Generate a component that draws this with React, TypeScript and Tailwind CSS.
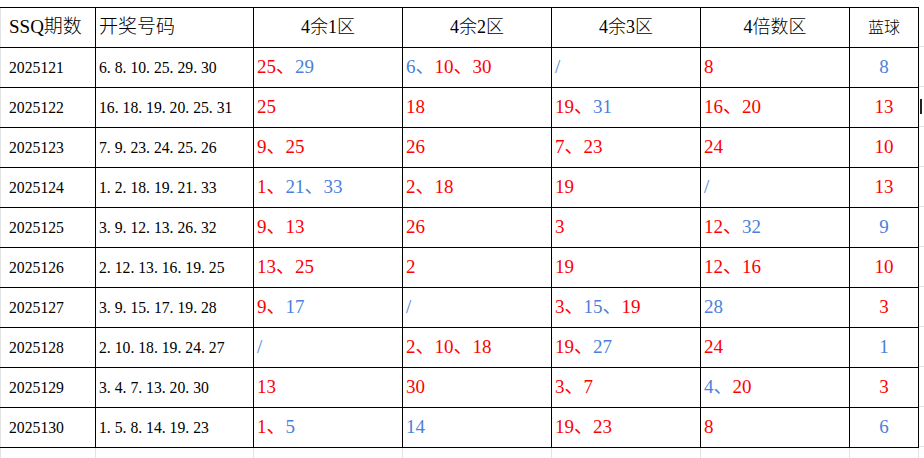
import React from 'react';

type Tone = 'r' | 'b';
type Pick = [string, Tone];

interface Draw {
    issue: string;
    numbers: string;
    zones: Pick[][];
    blue: Pick;
}

const draws: Draw[] = [
    { issue: '2025121', numbers: '6.8.10.25.29.30', zones: [[['25', 'r'], ['29', 'b']], [['6', 'b'], ['10', 'r'], ['30', 'r']], [['/', 'b']], [['8', 'r']]], blue: ['8', 'b'] },
    { issue: '2025122', numbers: '16.18.19.20.25.31', zones: [[['25', 'r']], [['18', 'r']], [['19', 'r'], ['31', 'b']], [['16', 'r'], ['20', 'r']]], blue: ['13', 'r'] },
    { issue: '2025123', numbers: '7.9.23.24.25.26', zones: [[['9', 'r'], ['25', 'r']], [['26', 'r']], [['7', 'r'], ['23', 'r']], [['24', 'r']]], blue: ['10', 'r'] },
    { issue: '2025124', numbers: '1.2.18.19.21.33', zones: [[['1', 'r'], ['21', 'b'], ['33', 'b']], [['2', 'r'], ['18', 'r']], [['19', 'r']], [['/', 'b']]], blue: ['13', 'r'] },
    { issue: '2025125', numbers: '3.9.12.13.26.32', zones: [[['9', 'r'], ['13', 'r']], [['26', 'r']], [['3', 'r']], [['12', 'r'], ['32', 'b']]], blue: ['9', 'b'] },
    { issue: '2025126', numbers: '2.12.13.16.19.25', zones: [[['13', 'r'], ['25', 'r']], [['2', 'r']], [['19', 'r']], [['12', 'r'], ['16', 'r']]], blue: ['10', 'r'] },
    { issue: '2025127', numbers: '3.9.15.17.19.28', zones: [[['9', 'r'], ['17', 'b']], [['/', 'b']], [['3', 'r'], ['15', 'b'], ['19', 'r']], [['28', 'b']]], blue: ['3', 'r'] },
    { issue: '2025128', numbers: '2.10.18.19.24.27', zones: [[['/', 'b']], [['2', 'r'], ['10', 'r'], ['18', 'r']], [['19', 'r'], ['27', 'b']], [['24', 'r']]], blue: ['1', 'b'] },
    { issue: '2025129', numbers: '3.4.7.13.20.30', zones: [[['13', 'r']], [['30', 'r']], [['3', 'r'], ['7', 'r']], [['4', 'b'], ['20', 'r']]], blue: ['3', 'r'] },
    { issue: '2025130', numbers: '1.5.8.14.19.23', zones: [[['1', 'r'], ['5', 'b']], [['14', 'b']], [['19', 'r'], ['23', 'r']], [['8', 'r']]], blue: ['6', 'b'] },
];

const tone = (t: Tone) => (t === 'r' ? 'text-[#ff0000]' : 'text-[#4b7fdb]');

const cell = 'h-[40px] border-r border-b border-black flex items-center';

// half-width glyph cells, like the 宋体 digits in the sheet
const Mono: React.FC<{ text: string }> = ({ text }) => (
    <span className="flex">
        {text.split('').map((ch, i) => (
            <span key={i} className={ch === '.' ? 'inline-block w-[7.85px] text-left' : 'inline-block w-[7.85px] text-center'}>
                {ch}
            </span>
        ))}
    </span>
);

const Zone: React.FC<{ picks: Pick[] }> = ({ picks }) => (
    <span>
        {picks.map(([n, t], i) => (
            <span key={i} className={tone(t)}>
                {n}
                {i < picks.length - 1 && '、'}
            </span>
        ))}
    </span>
);

export default function App() {
    return (
        <div className="w-[924px] h-[458px] bg-white overflow-hidden pt-[7px] flex font-['Liberation_Serif','Noto_Sans_CJK_SC',serif]">
            <div className="w-[919px] flex-shrink-0 shadow-[inset_1px_0_0_#e3e3e3]">
                <div className="grid grid-cols-[96px_158px_149px_149px_149px_149px_69px] border-t border-black text-black">
                    {/* Header */}
                    <div className={`${cell} pl-[9px] text-[19px] font-light`}>SSQ期数</div>
                    <div className={`${cell} pl-[3px] text-[19px] font-light`}>开奖号码</div>
                    <div className={`${cell} justify-center text-[18px] font-light`}>4余1区</div>
                    <div className={`${cell} justify-center text-[18px] font-light`}>4余2区</div>
                    <div className={`${cell} justify-center text-[18px] font-light`}>4余3区</div>
                    <div className={`${cell} justify-center text-[18px] font-light`}>4倍数区</div>
                    <div className={`${cell} justify-center text-[16px] font-light`}>蓝球</div>

                    {draws.map((d) => (
                        <React.Fragment key={d.issue}>
                            <div className={`${cell} pl-[9px] text-[15.7px]`}>
                                <Mono text={d.issue} />
                            </div>
                            <div className={`${cell} pl-[3px] text-[15.7px]`}>
                                <Mono text={d.numbers} />
                            </div>
                            {d.zones.map((z, i) => (
                                <div key={i} className={`${cell} pl-[3px] text-[19px]`}>
                                    <Zone picks={z} />
                                </div>
                            ))}
                            <div className={`${cell} justify-center text-[19px]`}>
                                <span className={tone(d.blue[1])}>{d.blue[0]}</span>
                            </div>
                        </React.Fragment>
                    ))}
                </div>

                {/* sheet gridlines below the table */}
                <div className="grid grid-cols-[96px_158px_149px_149px_149px_149px_69px] h-[11px]">
                    {[...Array(7)].map((_, i) => (
                        <div key={i} className="border-r border-[#e3e3e3]" />
                    ))}
                </div>
            </div>

            {/* right edge of the next sheet column */}
            <div className="flex-1 flex flex-col">
                {[...Array(11)].map((_, i) => (
                    <div key={i} className="h-[40px] border-b border-[#e3e3e3] flex items-center">
                        {i === 2 && <div className="ml-[1px] w-[2px] h-[15px] bg-[#222]" />}
                    </div>
                ))}
            </div>
        </div>
    );
}
